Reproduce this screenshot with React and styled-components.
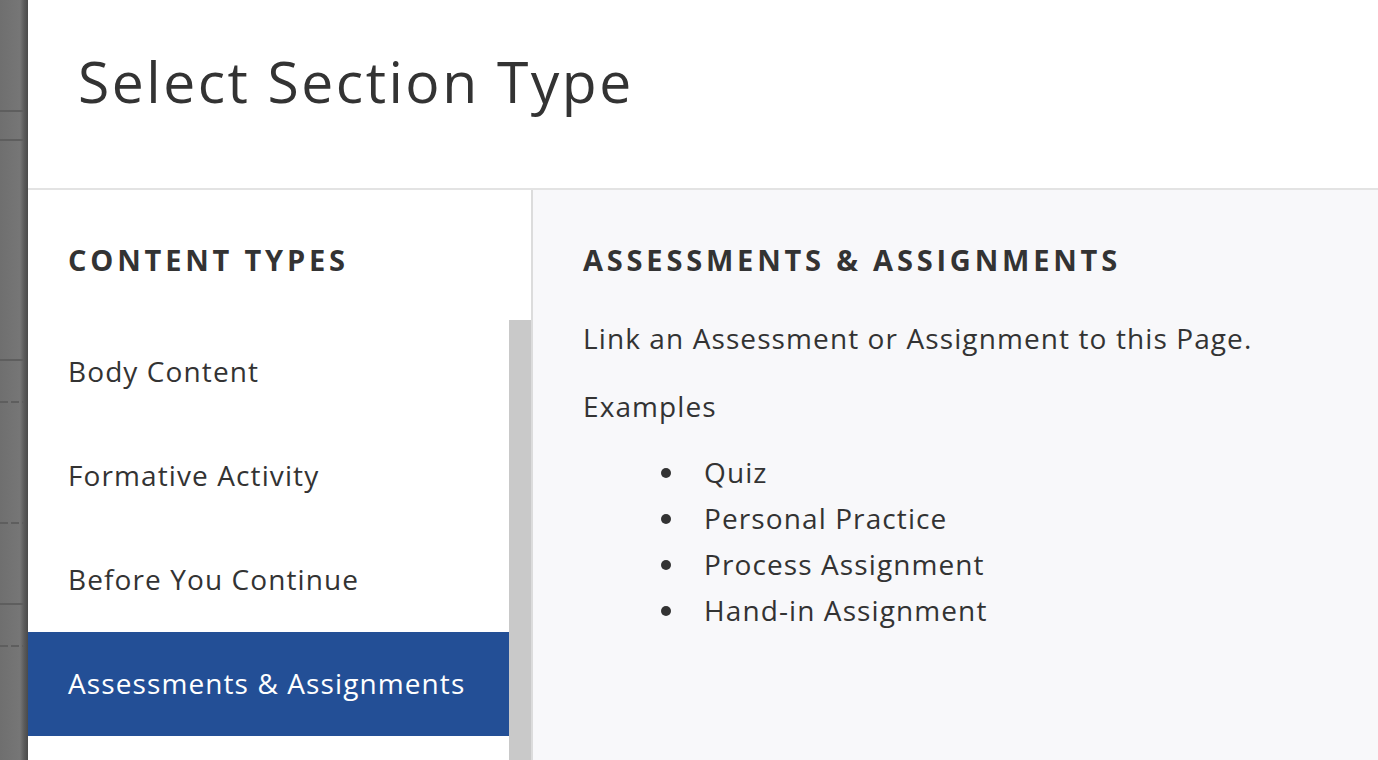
import React from "react";
import styled, { createGlobalStyle } from "styled-components";

const Global = createGlobalStyle`
  html, body { margin: 0; padding: 0; height: 100%; overflow: hidden; }
  body { font-family: "Open Sans", Lato, sans-serif; color: #333; background: #fff; }
  #root { height: 100%; }
`;

const Screen = styled.div`
  display: flex;
  height: 760px;
  width: 1378px;
`;

const Backdrop = styled.div`
  position: relative;
  width: 28px;
  flex: none;
  background: linear-gradient(to right, #6f6f6f 0, #767676 20px, #5c5c5c 24px, #4a4a4a 28px);
`;

const BackdropLine = styled.div`
  position: absolute;
  left: 0;
  width: 24px;
  height: 2px;
  background: ${(p) => (p.$dashed ? "repeating-linear-gradient(to right, #5e5e5e 0 8px, transparent 8px 11px)" : "#5e5e5e")};
`;

const Modal = styled.div`
  flex: 1;
  display: flex;
  flex-direction: column;
  background: #fff;
  min-width: 0;
`;

const Header = styled.header`
  height: 190px;
  flex: none;
  border-bottom: 2px solid #e3e3e3;
  display: flex;
  align-items: center;
  padding-left: 50px;
  box-sizing: border-box;
`;

const Title = styled.h1`
  margin: 0 0 26px;
  font-weight: 400;
  font-size: 57px;
  letter-spacing: 2.5px;
  color: #333;
`;

const Body = styled.div`
  flex: 1;
  display: flex;
  min-height: 0;
`;

const Sidebar = styled.aside`
  width: 503px;
  flex: none;
  display: flex;
  flex-direction: column;
  border-right: 2px solid #dcdcdc;
`;

const SectionHeading = styled.h2`
  margin: 0;
  height: 130px;
  box-sizing: border-box;
  padding-top: 8px;
  display: flex;
  align-items: center;
  padding-left: ${(p) => p.$indent}px;
  font-weight: 700;
  font-size: 29px;
  letter-spacing: 3.8px;
  color: #333;
`;

const ListArea = styled.div`
  flex: 1;
  display: flex;
  min-height: 0;
`;

const List = styled.ul`
  list-style: none;
  margin: 0;
  padding: 0;
  flex: 1;
`;

const Item = styled.li`
  height: 104px;
  box-sizing: border-box;
  padding-bottom: 3px;
  display: flex;
  align-items: center;
  padding-left: 40px;
  font-size: 28px;
  letter-spacing: 1.1px;
  color: ${(p) => (p.$active ? "#fff" : "#333")};
  background: ${(p) => (p.$active ? "#234f96" : "transparent")};
`;

const Thumb = styled.div`
  width: 22px;
  flex: none;
  background: #c9c9c9;
`;

const Detail = styled.section`
  flex: 1;
  background: #f8f8fa;
  display: flex;
  flex-direction: column;
`;

const Para = styled.p`
  margin: 0 0 ${(p) => p.$gap}px;
  padding-left: 50px;
  font-size: 28px;
  letter-spacing: 1.1px;
  line-height: 36px;
`;

const Examples = styled.ul`
  margin: 0;
  padding-left: 155px;
  font-size: 28px;
  letter-spacing: 1.1px;
  line-height: 46px;
  li { padding-left: 16px; }
`;

const items = ["Body Content", "Formative Activity", "Before You Continue", "Assessments & Assignments"];
const examples = ["Quiz", "Personal Practice", "Process Assignment", "Hand-in Assignment"];
const lines = [
  { y: 110 }, { y: 139 }, { y: 359 }, { y: 401, d: true }, { y: 522, d: true }, { y: 603 }, { y: 645, d: true },
];

export default function App() {
  return (
    <>
      <Global />
      <Screen>
        <Backdrop>
          {lines.map((l, i) => (
            <BackdropLine key={i} $dashed={l.d} style={{ top: l.y }} />
          ))}
        </Backdrop>
        <Modal>
          <Header>
            <Title>Select Section Type</Title>
          </Header>
          <Body>
            <Sidebar>
              <SectionHeading $indent={40}>CONTENT TYPES</SectionHeading>
              <ListArea>
                <List>
                  {items.map((t, i) => (
                    <Item key={t} $active={i === 3}>{t}</Item>
                  ))}
                </List>
                <Thumb />
              </ListArea>
            </Sidebar>
            <Detail>
              <SectionHeading $indent={50}>ASSESSMENTS &amp; ASSIGNMENTS</SectionHeading>
              <Para $gap={32}>Link an Assessment or Assignment to this Page.</Para>
              <Para $gap={25}>Examples</Para>
              <Examples>
                {examples.map((e) => (
                  <li key={e}>{e}</li>
                ))}
              </Examples>
            </Detail>
          </Body>
        </Modal>
      </Screen>
    </>
  );
}
